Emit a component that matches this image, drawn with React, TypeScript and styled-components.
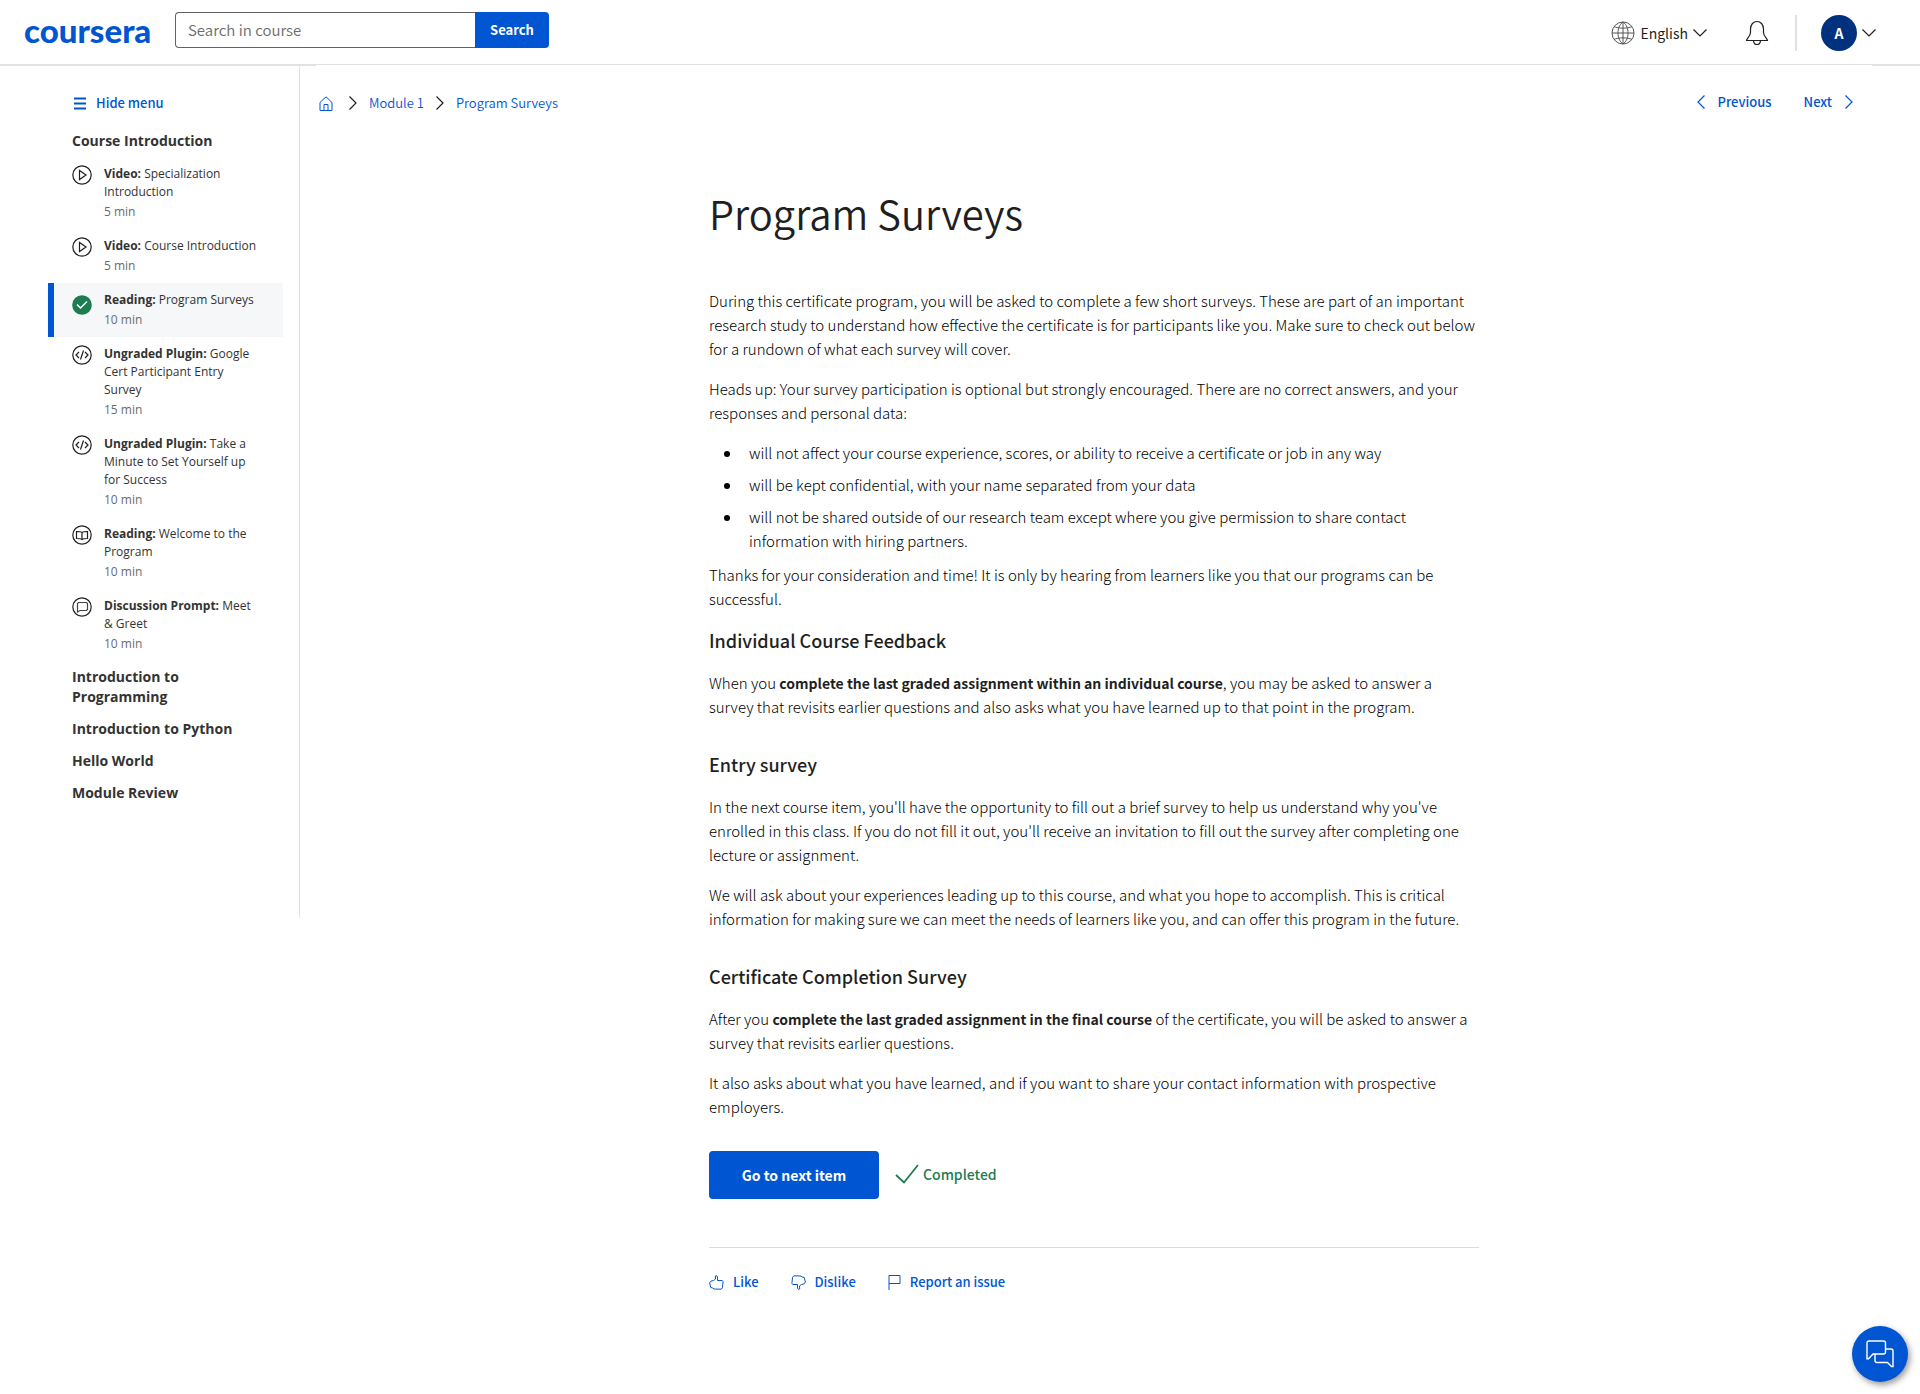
import React from "react";
import styled, { createGlobalStyle, css } from "styled-components";

const BLUE = "#0056d2";
const INK = "#1f1f1f";
const LINE = "#e1e1e1";
const SOURCE = `"Source Sans Pro", "Noto Sans CJK SC", "Noto Sans", sans-serif`;
const OPEN = `"Open Sans", "Noto Sans", sans-serif`;

const GlobalStyle = createGlobalStyle`
  *, *::before, *::after { box-sizing: border-box; }
  body { margin: 0; background: #fff; color: ${INK}; font-family: ${SOURCE}; font-size: 14px; line-height: 20px; }
  button, input, select { font: inherit; color: inherit; }
  h1, h2, h3, p, ul { margin: 0; padding: 0; }
  a { color: ${BLUE}; text-decoration: none; }
  svg { display: block; flex: none; }
`;

/* ---------- icons ---------- */

type IconProps = { d: string; w: number; h: number; sw?: number; color?: string };
const Icon = ({ d, w, h, sw = 1, color = "currentColor" }: IconProps) => (
  <svg width={w} height={h} viewBox={`0 0 ${w} ${h}`} fill="none" stroke={color} strokeWidth={sw} aria-hidden="true">
    <path d={d} />
  </svg>
);

const ChevronDown = () => <Icon w={14} h={8} sw={1.2} d="M.5.5 7 7 13.5.5" />;
const ChevronRight = ({ color }: { color?: string }) => <Icon w={8} h={14} sw={1.2} color={color} d="M.5.5 7 7 .5 13.5" />;
const ChevronLeft = () => <Icon w={8} h={14} sw={1.2} d="M7.5.5 1 7l6.5 6.5" />;

const Globe = () => (
  <Icon
    w={24}
    h={24}
    color="#555"
    d="M12 1a11 11 0 1 0 0 22a11 11 0 1 0 0-22M12 1v22M1 12h22M12 1C8 4 7 8 7 12s1 8 5 11M12 1c4 3 5 7 5 11s-1 8-5 11M3 5.500c4 2.200 14 2.200 18 0M3 18.500c4-2.200 14-2.200 18 0"
  />
);
const Bell = () => (
  <Icon
    w={24}
    h={26}
    sw={1.2}
    d="M1.500 20.500c0-2 4-4 4-8V9c0-4 2.500-7.500 6.500-7.500S18.500 5 18.500 9v3.500c0 4 4 6 4 8zM8.500 20.800c.3 2.200 1.500 3.700 3.500 3.700s3.200-1.500 3.500-3.700"
  />
);
const Bars = () => <Icon w={12} h={13} sw={2} d="M0 1.500h12M0 6.500h12M0 11.500h12" />;
const Home = () => <Icon w={14} h={15} d="M1 6.500 7 .8l6 5.700v8H1zM5 14.500v-6h4v6" />;
const Check = () => <Icon w={24} h={20} sw={1.8} d="M1 11l8 7.500L23 1" />;
const thumb =
  "M4.500 5.500 6.500 4 6.300 1 7.500.6 8.500 2v3.500h4.800l.8 1.200-.7 6-1.200 1.500-7.200-.2-1.200-1-2-.5L.6 8 1.800 6.200z";
const Thumb = () => <Icon w={15} h={15} d={thumb} />;
const Flag = () => <Icon w={13} h={15} d="M1 15V.5h11v8H1" />;
const Chat = () => (
  <svg width="28" height="28" viewBox="0 0 28 28" fill="none" stroke="#fff" strokeWidth="1.4" aria-hidden="true">
    <path d="M3 1h14.500a2 2 0 0 1 2 2v9a2 2 0 0 1-2 2H7L2.500 18.700H1V3a2 2 0 0 1 2-2z" />
    <path d="M19.500 9h5.500a2 2 0 0 1 2 2v15.500h-1.500L21.500 22.500H11a2 2 0 0 1-2-2V14" />
  </svg>
);

type Kind = "video" | "done" | "plugin" | "reading" | "prompt";
const KindIcon = ({ kind }: { kind: Kind }) => (
  <svg width="20" height="20" viewBox="0 0 20 20" fill="none" stroke={INK} strokeWidth="1.2" aria-hidden="true">
    {kind === "done" ? (
      <>
        <circle cx="10" cy="10" r="9.800" fill="#1d7c50" stroke="none" />
        <path d="M5 9.500l3.500 3.500L15 6.500" stroke="#fff" strokeWidth="1.500" />
      </>
    ) : (
      <circle cx="10" cy="10" r="9.200" />
    )}
    {kind === "video" && <path d="M7.500 5.500v9L14 10z" />}
    {kind === "plugin" && <path d="M7 7l-3 3 3 3M13 7l3 3-3 3M11.500 5.500l-3 9" />}
    {kind === "reading" && <path d="M10 7.500c-1-1-2.500-1-5.500-1V13.500c3 0 4.500 0 5.500 1c1-1 2.500-1 5.500-1V6.500c-3 0-4.500 0-5.500 1v7" />}
    {kind === "prompt" && <path d="M6.500 5.500h8l1 1v6l-1 1H8l-2.500 1.500V6.500z" stroke="#444" />}
  </svg>
);

/* ---------- header ---------- */

const Header = styled.header`
  display: flex;
  justify-content: space-between;
  align-items: flex-start;
  height: 66px;
  padding: 12px 44px 0 24px;
  border-bottom: 2px solid ${LINE};
`;
const HeaderGroup = styled.div`
  display: flex;
  align-items: center;
`;
const Logo = styled.a`
  display: flex;
  align-items: center;
  width: 127px;
  height: 36px;
  margin-right: 24px;
  font: 900 33px/36px Lato, sans-serif;
`;
const SearchForm = styled.form`
  display: flex;
  height: 36px;
`;
const SearchInput = styled.input`
  width: 300px;
  padding: 0 12px;
  border: 1px solid #636363;
  border-right: 0;
  border-radius: 4px 0 0 4px;
  font-size: 15px;
  font-weight: 350;
  outline: 0;
  &::placeholder { color: #6b6b6b; opacity: 1; }
`;
const SearchButton = styled.button`
  width: 74px;
  border: 0;
  border-radius: 0 4px 4px 0;
  background: ${BLUE};
  color: #fff;
  font-size: 13px;
  font-weight: 700;
`;
const Tools = styled(HeaderGroup)`
  height: 42px;
`;
const Language = styled.label`
  display: flex;
  align-items: center;
  gap: 5px;
  margin-right: 38px;
`;
const LanguageSelect = styled.select`
  appearance: none;
  field-sizing: content;
  border: 0;
  padding: 0;
  background: none;
  font-size: 14px;
  line-height: 24px;
`;
const IconButton = styled.button`
  display: flex;
  align-items: center;
  gap: 5px;
  padding: 0;
  border: 0;
  background: none;
`;
const Divider = styled.span`
  width: 2px;
  height: 36px;
  margin: 0 24px 0 26px;
  background: ${LINE};
`;
const Avatar = styled.span`
  display: grid;
  place-items: center;
  width: 36px;
  height: 36px;
  border-radius: 50%;
  background: #00317f;
  color: #fff;
  font-size: 14px;
  font-weight: 700;
`;

/* ---------- sidebar ---------- */

const Body = styled.div`
  display: flex;
  align-items: flex-start;
`;
const Sidebar = styled.nav`
  flex: 0 0 300px;
  padding: 27px 16px 109px 48px;
  border-right: 1px solid ${LINE};
  font-family: ${OPEN};
`;
const HideMenu = styled.button`
  display: flex;
  align-items: center;
  gap: 10px;
  margin-bottom: 12px;
  padding: 0 0 0 26px;
  border: 0;
  background: none;
  color: ${BLUE};
  font: 500 13px/20px ${SOURCE};
`;
const SectionTitle = styled.h2`
  padding: 6px 24px;
  font-size: 14px;
  font-weight: 700;
  line-height: 20px;
  color: #333;
`;
const Items = styled.ul`
  list-style: none;
`;
const ItemLink = styled.a<{ $active?: boolean }>`
  display: flex;
  gap: 12px;
  padding: 8px 24px;
  color: #333;
  font-size: 12px;
  line-height: 18px;
  ${(p) =>
    p.$active &&
    css`
      padding-left: 18px;
      border-left: 6px solid ${BLUE};
      background: #f5f7f8;
      svg { margin-top: 4px; }
    `}
`;
const Kicker = styled.strong`
  font-weight: 700;
`;
const Duration = styled.span`
  display: block;
  margin-top: 2px;
  color: #6b6b6b;
`;

/* ---------- main ---------- */

const Main = styled.main`
  flex: 1;
  min-width: 0;
  margin: -1px 48px 0 16px;
  padding-bottom: 80px;
  background: #fff;
`;
const TopBar = styled.div`
  display: flex;
  justify-content: space-between;
  align-items: flex-start;
  padding: 27px 19px 0 3px;
  font-size: 13px;
`;
const Crumbs = styled.nav`
  display: flex;
  align-items: center;
  gap: 12px;
  padding-top: 1px;
  font-weight: 350;
  a:first-child { margin-right: 4px; }
`;
const Pager = styled.nav`
  display: flex;
  gap: 32px;
  font-weight: 500;
`;
const PagerLink = styled.a`
  display: flex;
  align-items: center;
  gap: 13px;
`;
const Article = styled.article`
  max-width: 770px;
  margin: 0 auto;
  padding-top: 70px;
`;
const Title = styled.h1`
  margin-bottom: 46px;
  font-size: 40px;
  font-weight: 350;
  line-height: 60px;
`;
const Paragraph = styled.p`
  margin-bottom: 16px;
  font-size: 15px;
  font-weight: 300;
  line-height: 24px;
  color: #000;
  strong { font-size: 14px; font-weight: 700; color: ${INK}; }
`;
const Bullets = styled.ul`
  margin-bottom: 10px;
  padding-left: 33px;
  font-size: 15px;
  font-weight: 300;
  line-height: 24px;
  color: #000;
  li { padding-left: 7px; }
  li + li { margin-top: 8px; }
`;
const Heading = styled.h3<{ $first?: boolean }>`
  margin: ${(p) => (p.$first ? 16 : 32)}px 0 18px;
  font-size: 18px;
  font-weight: 500;
  line-height: 26px;
`;
const Actions = styled.div`
  display: flex;
  align-items: center;
  gap: 16px;
  margin: 32px 0 48px;
`;
const NextButton = styled.button`
  width: 170px;
  height: 48px;
  border: 0;
  border-radius: 4px;
  background: ${BLUE};
  color: #fff;
  font-size: 14px;
  font-weight: 700;
`;
const Completed = styled.span`
  display: flex;
  align-items: center;
  gap: 4px;
  padding-bottom: 2px;
  color: #1d7c50;
  font-size: 14px;
  font-weight: 500;
`;
const Feedback = styled.footer`
  display: flex;
  gap: 32px;
  padding-top: 24px;
  border-top: 1px solid #dadada;
`;
const FeedbackButton = styled.button<{ $down?: boolean }>`
  display: flex;
  align-items: center;
  gap: 9px;
  padding: 0;
  border: 0;
  background: none;
  color: ${BLUE};
  font-size: 13px;
  font-weight: 500;
  line-height: 20px;
  svg { transform: ${(p) => (p.$down ? "rotate(180deg)" : "none")}; }
`;
const ChatButton = styled.button`
  position: fixed;
  right: 12px;
  bottom: 12px;
  display: grid;
  place-items: center;
  width: 56px;
  height: 56px;
  padding: 0;
  border: 0;
  border-radius: 50%;
  background: ${BLUE};
  box-shadow: 2px 3px 6px rgba(0, 0, 0, 0.4);
`;

const ITEMS: { kind: Kind; type: string; name: string; time: string }[] = [
  { kind: "video", type: "Video:", name: "Specialization Introduction", time: "5 min" },
  { kind: "video", type: "Video:", name: "Course Introduction", time: "5 min" },
  { kind: "done", type: "Reading:", name: "Program Surveys", time: "10 min" },
  { kind: "plugin", type: "Ungraded Plugin:", name: "Google Cert Participant Entry Survey", time: "15 min" },
  { kind: "plugin", type: "Ungraded Plugin:", name: "Take a Minute to Set Yourself up for Success", time: "10 min" },
  { kind: "reading", type: "Reading:", name: "Welcome to the Program", time: "10 min" },
  { kind: "prompt", type: "Discussion Prompt:", name: "Meet & Greet", time: "10 min" },
];
const SECTIONS = ["Introduction to Programming", "Introduction to Python", "Hello World", "Module Review"];

export default function App() {
  return (
    <>
      <GlobalStyle />
      <Header>
        <HeaderGroup>
          <Logo href="#">coursera</Logo>
          <SearchForm role="search" onSubmit={(e) => e.preventDefault()}>
            <SearchInput type="text" aria-label="Search in course" placeholder="Search in course" />
            <SearchButton type="submit">Search</SearchButton>
          </SearchForm>
        </HeaderGroup>
        <Tools>
          <Language>
            <Globe />
            <LanguageSelect aria-label="Language" defaultValue="English">
              <option>English</option>
            </LanguageSelect>
            <ChevronDown />
          </Language>
          <IconButton type="button" aria-label="Notifications">
            <Bell />
          </IconButton>
          <Divider />
          <IconButton type="button" aria-label="Account">
            <Avatar>A</Avatar>
            <ChevronDown />
          </IconButton>
        </Tools>
      </Header>

      <Body>
        <Sidebar aria-label="Course">
          <HideMenu type="button">
            <Bars />
            Hide menu
          </HideMenu>
          <SectionTitle>Course Introduction</SectionTitle>
          <Items>
            {ITEMS.map((item) => (
              <li key={item.type + item.name}>
                <ItemLink href="#" $active={item.kind === "done"}>
                  <KindIcon kind={item.kind} />
                  <span>
                    <Kicker>{item.type}</Kicker> {item.name}
                    <Duration>{item.time}</Duration>
                  </span>
                </ItemLink>
              </li>
            ))}
          </Items>
          {SECTIONS.map((name) => (
            <SectionTitle key={name}>{name}</SectionTitle>
          ))}
        </Sidebar>

        <Main>
          <TopBar>
            <Crumbs aria-label="Breadcrumb">
              <a href="#" aria-label="Home">
                <Home />
              </a>
              <ChevronRight color={INK} />
              <a href="#">Module 1</a>
              <ChevronRight color={INK} />
              <a href="#">Program Surveys</a>
            </Crumbs>
            <Pager aria-label="Item">
              <PagerLink href="#">
                <ChevronLeft />
                Previous
              </PagerLink>
              <PagerLink href="#">
                Next
                <ChevronRight />
              </PagerLink>
            </Pager>
          </TopBar>

          <Article>
            <Title>Program Surveys</Title>
            <Paragraph>
              During this certificate program, you will be asked to complete a few short surveys. These are part of an
              important research study to understand how effective the certificate is for participants like you. Make
              sure to check out below for a rundown of what each survey will cover.
            </Paragraph>
            <Paragraph>
              Heads up: Your survey participation is optional but strongly encouraged. There are no correct answers, and
              your responses and personal data:
            </Paragraph>
            <Bullets>
              <li>will not affect your course experience, scores, or ability to receive a certificate or job in any way</li>
              <li>will be kept confidential, with your name separated from your data</li>
              <li>
                will not be shared outside of our research team except where you give permission to share contact
                information with hiring partners.
              </li>
            </Bullets>
            <Paragraph>
              Thanks for your consideration and time! It is only by hearing from learners like you that our programs can
              be successful.
            </Paragraph>
            <Heading $first>Individual Course Feedback</Heading>
            <Paragraph>
              When you <strong>complete the last graded assignment within an individual course</strong>, you may be
              asked to answer a survey that revisits earlier questions and also asks what you have learned up to that
              point in the program.
            </Paragraph>
            <Heading>Entry survey</Heading>
            <Paragraph>
              In the next course item, you'll have the opportunity to fill out a brief survey to help us understand why
              you've enrolled in this class. If you do not fill it out, you'll receive an invitation to fill out the
              survey after completing one lecture or assignment.
            </Paragraph>
            <Paragraph>
              We will ask about your experiences leading up to this course, and what you hope to accomplish. This is
              critical information for making sure we can meet the needs of learners like you, and can offer this
              program in the future.
            </Paragraph>
            <Heading>Certificate Completion Survey</Heading>
            <Paragraph>
              After you <strong>complete the last graded assignment in the final course</strong> of the certificate, you
              will be asked to answer a survey that revisits earlier questions.
            </Paragraph>
            <Paragraph>
              It also asks about what you have learned, and if you want to share your contact information with
              prospective employers.
            </Paragraph>
            <Actions>
              <NextButton type="button">Go to next item</NextButton>
              <Completed>
                <Check />
                Completed
              </Completed>
            </Actions>
            <Feedback>
              <FeedbackButton type="button">
                <Thumb />
                Like
              </FeedbackButton>
              <FeedbackButton type="button" $down>
                <Thumb />
                Dislike
              </FeedbackButton>
              <FeedbackButton type="button">
                <Flag />
                Report an issue
              </FeedbackButton>
            </Feedback>
          </Article>
        </Main>
      </Body>

      <ChatButton type="button" aria-label="Chat">
        <Chat />
      </ChatButton>
    </>
  );
}
